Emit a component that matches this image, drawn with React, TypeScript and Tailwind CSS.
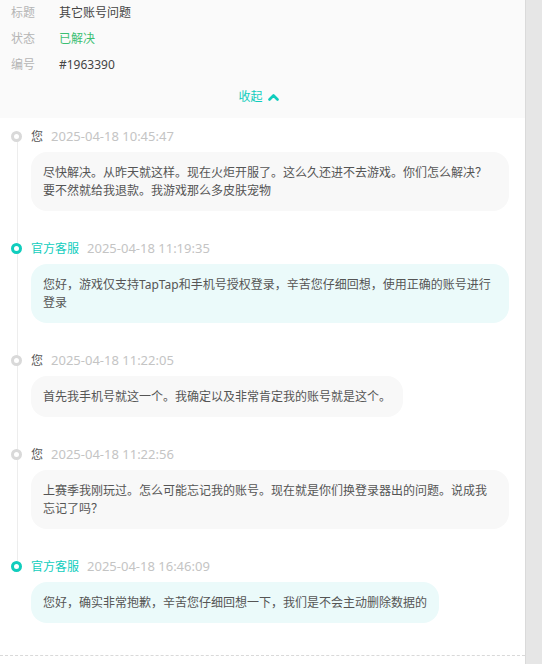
type Msg = {
  staff: boolean
  time: string
  text: string
}

const msgs: Msg[] = [
  { staff: false, time: '2025-04-18 10:45:47', text: '尽快解决。从昨天就这样。现在火炬开服了。这么久还进不去游戏。你们怎么解决？要不然就给我退款。我游戏那么多皮肤宠物' },
  { staff: true, time: '2025-04-18 11:19:35', text: '您好，游戏仅支持TapTap和手机号授权登录，辛苦您仔细回想，使用正确的账号进行登录' },
  { staff: false, time: '2025-04-18 11:22:05', text: '首先我手机号就这一个。我确定以及非常肯定我的账号就是这个。' },
  { staff: false, time: '2025-04-18 11:22:56', text: '上赛季我刚玩过。怎么可能忘记我的账号。现在就是你们换登录器出的问题。说成我忘记了吗？' },
  { staff: true, time: '2025-04-18 16:46:09', text: '您好，确实非常抱歉，辛苦您仔细回想一下，我们是不会主动删除数据的' },
]

const info = [
  { label: '标题', value: '其它账号问题', cls: 'text-[#444]' },
  { label: '状态', value: '已解决', cls: 'text-[#3cbf73]' },
  { label: '编号', value: '#1963390', cls: 'text-[#444]' },
]

export default function App() {
  return (
    <div className="flex w-[542px] h-[664px] overflow-hidden bg-white font-['Noto_Sans','Noto_Sans_CJK_SC',sans-serif]">
      <div className="flex-1 flex flex-col">
        {/* ticket info */}
        <div className="h-[118px] bg-[#fafafa] px-[11px] text-[12px]">
          {info.map(row => (
            <div key={row.label} className="flex items-center h-[26px]">
              <span className="w-[48px] text-[#b5b5b5]">{row.label}</span>
              <span className={row.cls}>{row.value}</span>
            </div>
          ))}
          <div className="flex items-center justify-center gap-[5px] mt-[10px] pr-[8px] text-[12px] text-[#10cdbd]">
            <span>收起</span>
            <svg width="11" height="8" viewBox="0 0 11 8" fill="none">
              <polyline points="1.5,6.5 5.5,2.5 9.5,6.5" stroke="#10cdbd" strokeWidth="2.6" strokeLinecap="round" strokeLinejoin="round" />
            </svg>
          </div>
        </div>

        {/* conversation */}
        <div className="flex-1 pt-[8px] pl-[11px] pr-[16px]">
          {msgs.map((m, i) => (
            <div key={i} className={`relative ${i > 0 ? 'mt-[27px]' : ''}`}>
              {i < msgs.length - 1 && (
                <div className="absolute left-[6px] top-[10px] w-px h-[calc(100%+27px)] bg-[#ededed]" />
              )}
              <div className="relative flex items-center h-[21px]">
                <span
                  className={`w-[11px] h-[11px] rounded-full border-[3.5px] bg-white ${m.staff ? 'border-[#10cdbd]' : 'border-[#d9d9d9]'}`}
                />
                <span className={`ml-[9px] text-[12px] ${m.staff ? 'text-[#10cdbd]' : 'text-[#555]'}`}>
                  {m.staff ? '官方客服' : '您'}
                </span>
                <span className="ml-[8px] text-[13px] text-[#c4c4c4]">{m.time}</span>
              </div>
              <div
                className={`relative mt-[5px] ml-[20px] w-fit max-w-[478px] rounded-[16px] pl-[12px] pr-[12px] pt-[12px] pb-[11px] text-[12px] leading-[18px] text-[#555] ${m.staff ? 'bg-[#ebfafa]' : 'bg-[#f8f8f8]'}`}
              >
                {m.text}
              </div>
            </div>
          ))}
          <div className="mt-[32px] -ml-[11px] -mr-[16px] border-t border-dashed border-[#d9d9d9]" />
        </div>
      </div>
      <div className="w-[17px] bg-[#e6e6e6] border-l border-[#dadada]" />
    </div>
  )
}
